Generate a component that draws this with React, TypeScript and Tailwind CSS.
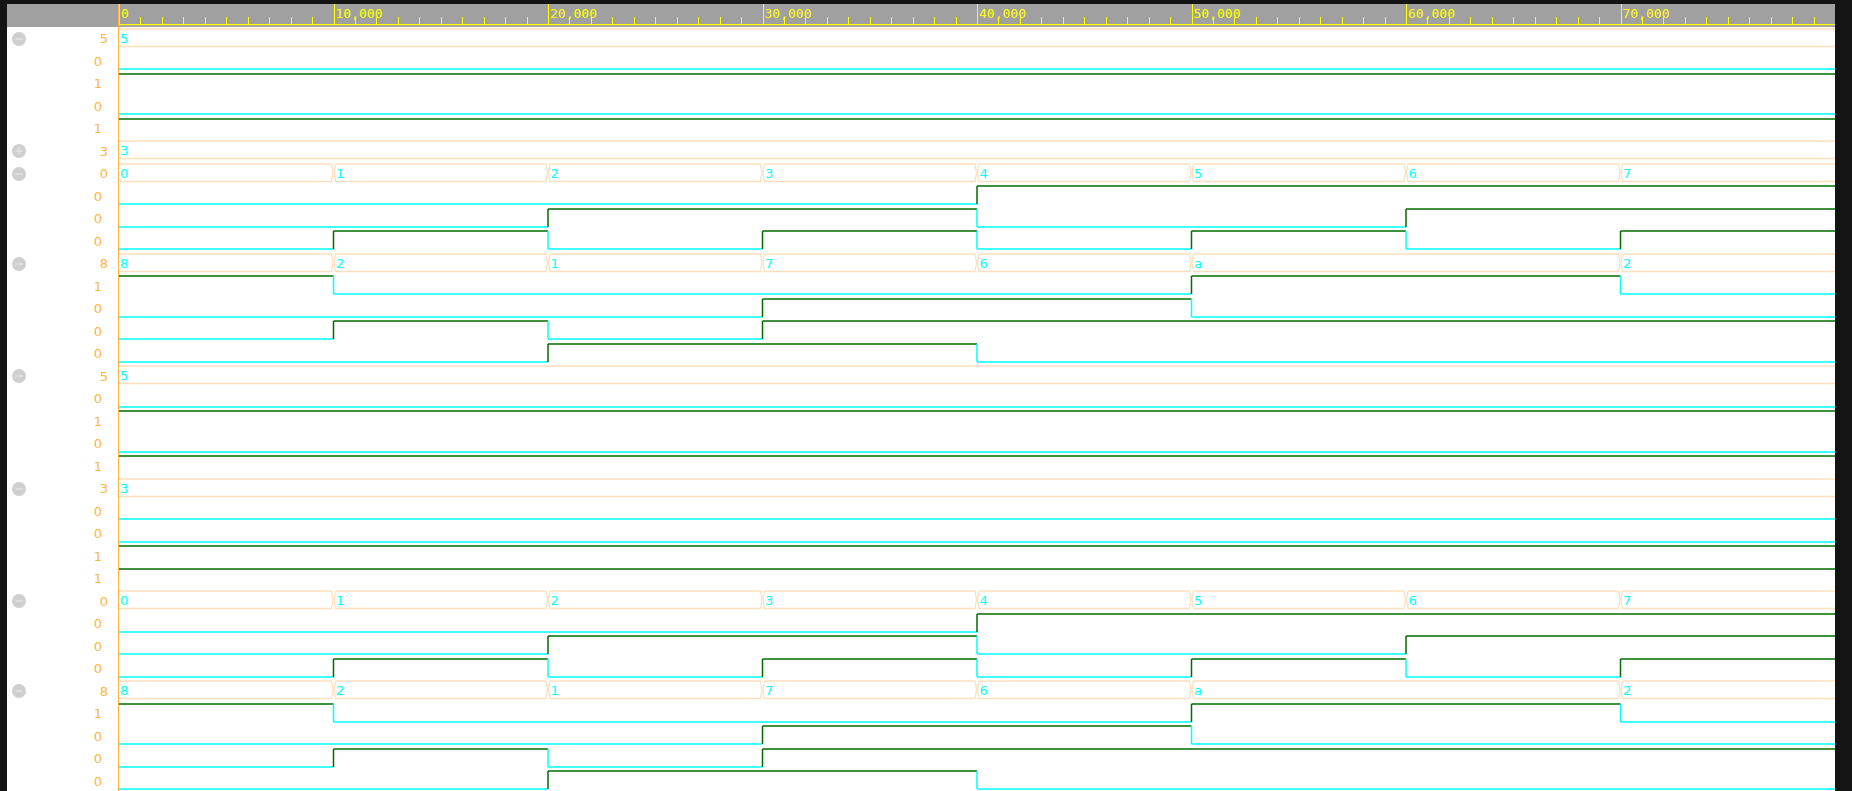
import React from 'react';

const W = 1716;
const ROW = 22.5;
const SPAN = 80000;
const CYAN = '#00ffff';
const GREEN = '#006b00';
const PEACH = '#ffdfbd';
const YELLOW = '#ffff00';

const X = (t: number) => (t / SPAN) * W;

type Seg = { t0: number; t1: number; v: number };

// merge equal neighbours of a per-10k value list into segments
function segsOf(vals: number[]): Seg[] {
	const out: Seg[] = [];
	vals.forEach((v, i) => {
		const last = out[out.length - 1];
		if (last && last.v === v) last.t1 = (i + 1) * 10000;
		else out.push({ t0: i * 10000, t1: (i + 1) * 10000, v });
	});
	return out;
}

type Row =
	| { kind: 'bus'; vals: number[]; collapsed?: boolean }
	| { kind: 'bit'; vals: number[] };

function group(vals: number[], width: number, collapsed = false): Row[] {
	const rows: Row[] = [{ kind: 'bus', vals, collapsed }];
	if (collapsed) return rows;
	for (let b = width - 1; b >= 0; b--) {
		rows.push({ kind: 'bit', vals: vals.map((v) => (v >> b) & 1) });
	}
	return rows;
}

const constant5 = [5, 5, 5, 5, 5, 5, 5, 5];
const constant3 = [3, 3, 3, 3, 3, 3, 3, 3];
const counter = [0, 1, 2, 3, 4, 5, 6, 7];
const pattern = [8, 2, 1, 7, 6, 10, 10, 2];

const rows: Row[] = [
	...group(constant5, 4),
	...group(constant3, 4, true),
	...group(counter, 3),
	...group(pattern, 4),
	...group(constant5, 4),
	...group(constant3, 4),
	...group(counter, 3),
	...group(pattern, 4),
];

function Ruler() {
	const ticks = [];
	for (let t = 0; t < SPAN; t += 1000) ticks.push(t);
	return (
		<svg width={W} height={ROW} className="block">
			{ticks.map((t) => {
				const x = Math.round(X(t)) + 0.5;
				const major = t % 10000 === 0;
				return (
					<line
						key={t}
						x1={x}
						x2={x}
						y1={major ? 0 : 13}
						y2={20}
						stroke={YELLOW}
						strokeWidth={1}
					/>
				);
			})}
			{ticks
				.filter((t) => t % 10000 === 0)
				.map((t) => (
					<text
						key={t}
						x={X(t) + 2}
						y={14}
						fill={YELLOW}
						fontSize={13}
						fontFamily="'DejaVu Sans Mono', monospace"
					>
						{t.toLocaleString('en-US')}
					</text>
				))}
			<rect x={0} y={20} width={W} height={1.2} fill={YELLOW} />
		</svg>
	);
}

function BusWave({ vals }: { vals: number[] }) {
	const segs = segsOf(vals);
	const top = 2;
	const bot = 19.5;
	const mid = (top + bot) / 2;
	const d = 2;
	return (
		<svg width={W} height={ROW} className="block">
			{segs.map((s) => {
				const x0 = X(s.t0);
				const x1 = X(s.t1);
				const l = s.t0 === 0 ? x0 : x0 + d;
				const r = s.t1 === SPAN ? x1 : x1 - d;
				let p = `M ${l} ${top} L ${r} ${top}`;
				if (s.t1 !== SPAN) p += ` L ${x1 - 0.5} ${mid} L ${r} ${bot}`;
				else p += ` M ${r} ${bot}`;
				p += ` L ${l} ${bot}`;
				if (s.t0 !== 0) p += ` L ${x0 + 0.5} ${mid} L ${l} ${top}`;
				return (
					<g key={s.t0}>
						<path d={p} fill="none" stroke={PEACH} strokeWidth={1.3} />
						<text
							x={x0 + (s.t0 === 0 ? 1 : 2.5)}
							y={15.5}
							fill={CYAN}
							fontSize={13}
							fontFamily="'DejaVu Sans', sans-serif"
						>
							{s.v.toString(16)}
						</text>
					</g>
				);
			})}
		</svg>
	);
}

function BitWave({ vals }: { vals: number[] }) {
	const segs = segsOf(vals);
	const y = (v: number) => (v ? 2 : 20);
	const col = (v: number) => (v ? GREEN : CYAN);
	return (
		<svg width={W} height={ROW} className="block">
			{segs.map((s, i) => (
				<g key={s.t0}>
					{i > 0 && (
						<line
							x1={X(s.t0)}
							x2={X(s.t0)}
							y1={y(segs[i - 1].v)}
							y2={y(s.v)}
							stroke={col(s.v)}
							strokeWidth={1.5}
						/>
					)}
					<line
						x1={X(s.t0)}
						x2={X(s.t1)}
						y1={y(s.v)}
						y2={y(s.v)}
						stroke={col(s.v)}
						strokeWidth={1.5}
					/>
				</g>
			))}
		</svg>
	);
}

function Toggle({ plus }: { plus?: boolean }) {
	return (
		<svg width={14} height={14} viewBox="0 0 14 14" className="block shrink-0">
			<circle cx={7} cy={7} r={7} fill="#cfcfcf" />
			<line x1={3.5} x2={10.5} y1={7} y2={7} stroke="#e4e4e4" strokeWidth={1.4} />
			{plus && <line x1={7} x2={7} y1={3.5} y2={10.5} stroke="#e4e4e4" strokeWidth={1.4} />}
		</svg>
	);
}

export default function App() {
	return (
		<div className="w-[1852px] h-[791px] overflow-hidden bg-[#141414] pt-[4px] pl-[7px]">
			<div className="flex w-[1828px] bg-white">
				{/* signal names / cursor values */}
				<div className="w-[112px] shrink-0 border-r border-[#ffb53d] font-['DejaVu_Sans',sans-serif] text-[13px] text-[#ffb53d]">
					<div className="h-[22.5px] bg-[#a0a0a0]" />
					{rows.map((r, i) => (
						<div key={i} className="h-[22.5px] flex items-center pl-[5px] pt-[2px]">
							{r.kind === 'bus' && <Toggle plus={r.collapsed} />}
							<span
								className={`ml-auto leading-none ${r.kind === 'bus' ? 'pr-[10px]' : 'pr-[16px]'}`}
							>
								{r.vals[0].toString(16)}
							</span>
						</div>
					))}
				</div>

				{/* waveforms */}
				<div className="flex-1 flex flex-col">
					<div className="h-[22.5px] bg-[#a0a0a0]">
						<Ruler />
					</div>
					{rows.map((r, i) =>
						r.kind === 'bus' ? (
							<BusWave key={i} vals={r.vals} />
						) : (
							<BitWave key={i} vals={r.vals} />
						),
					)}
				</div>
			</div>
		</div>
	);
}
